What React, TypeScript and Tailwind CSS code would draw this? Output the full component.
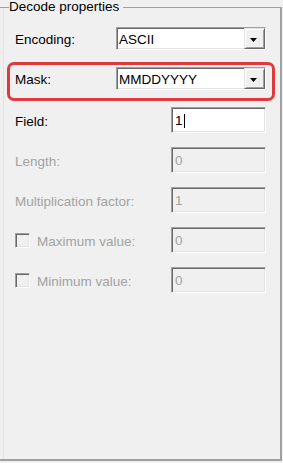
import React from "react";

const sunken =
  "border border-t-[#a0a0a0] border-l-[#a0a0a0] border-r-white border-b-white shadow-[inset_1px_1px_0_#696969,inset_-1px_-1px_0_#e3e3e3]";

function Combo({ value }: { value: string }) {
  return (
    <div className={`w-[150px] h-[23px] flex bg-white ${sunken}`}>
      <div className="flex-1 flex items-center pl-[2px] pt-[3px] text-black leading-[16px]">{value}</div>
      <div className="w-[21px] h-full flex items-center justify-center pt-[3px] pr-[3px] bg-[#f0f0f0] border border-t-[#e3e3e3] border-l-[#e3e3e3] border-r-[#696969] border-b-[#696969] shadow-[inset_1px_1px_0_#ffffff,inset_-1px_-1px_0_#a0a0a0]">
        <svg width="7" height="4" viewBox="0 0 7 4">
          <polygon points="0,0 7,0 3.5,4" fill="#000" />
        </svg>
      </div>
    </div>
  );
}

function TextBox({ value, disabled, cursor }: { value: string; disabled?: boolean; cursor?: boolean }) {
  return (
    <div
      className={`w-[95px] h-[26px] flex items-center pl-[3px] pt-[2px] leading-[16px] ${sunken} ${
        disabled ? "bg-[#f0f0f0] text-[#a3a3a3]" : "bg-white text-black"
      }`}
    >
      <span>{value}</span>
      {cursor && <span className="ml-[1px] w-[1px] h-[14px] bg-black" />}
    </div>
  );
}

function CheckBox() {
  return <div className={`w-[15px] h-[15px] bg-[#f0f0f0] ${sunken}`} />;
}

export default function App() {
  return (
    <div className="w-[283px] h-[463px] bg-[#f0f0f0] overflow-hidden font-['Liberation_Sans',Arial,sans-serif] text-[13.5px] leading-[16px] text-black">
      <div className="relative mt-[7px] w-[282px] h-[454px] border-t border-t-[#a0a0a0] border-r-2 border-r-[#a0a0a0] border-b-2 border-b-[#a0a0a0] shadow-[inset_3px_0_0_#f0f0f0,inset_4px_0_0_#e3e3e3] flex flex-col">
        <span className="absolute left-[9px] top-[-9px] pr-[4px] bg-[#f0f0f0] leading-[16px]">Decode properties</span>

        <div className="mt-[19px] h-[23px] flex items-center pl-[15px]">
          <span className="w-[101px] pt-[3px]">Encoding:</span>
          <Combo value="ASCII" />
        </div>

        <div className="mt-[12px] ml-[7px] w-[268px] h-[39px] border-[3px] border-[#e0393e] rounded-[7px] flex items-start pt-[2px] pl-[5px]">
          <div className="h-[23px] flex items-center">
            <span className="w-[101px] pt-[3px]">Mask:</span>
            <Combo value="MMDDYYYY" />
          </div>
        </div>

        <div className="mt-[6px] flex flex-col gap-[14px] pl-[15px]">
          <div className="h-[26px] flex items-center">
            <span className="w-[156px] pt-[3px]">Field:</span>
            <TextBox value="1" cursor />
          </div>
          <div className="h-[26px] flex items-center text-[#a3a3a3]">
            <span className="w-[156px] pt-[3px]">Length:</span>
            <TextBox value="0" disabled />
          </div>
          <div className="h-[26px] flex items-center text-[#a3a3a3]">
            <span className="w-[156px] pt-[3px]">Multiplication factor:</span>
            <TextBox value="1" disabled />
          </div>
          <div className="h-[26px] flex items-center text-[#a3a3a3]">
            <div className="w-[156px] flex items-center">
              <CheckBox />
              <span className="ml-[7px] pt-[3px]">Maximum value:</span>
            </div>
            <TextBox value="0" disabled />
          </div>
          <div className="h-[26px] flex items-center text-[#a3a3a3]">
            <div className="w-[156px] flex items-center">
              <CheckBox />
              <span className="ml-[7px] pt-[3px]">Minimum value:</span>
            </div>
            <TextBox value="0" disabled />
          </div>
        </div>
      </div>
    </div>
  );
}
